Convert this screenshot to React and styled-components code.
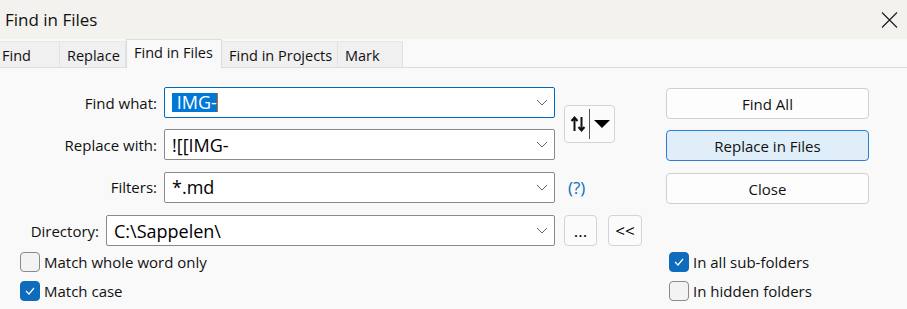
import React from 'react';
import styled, { createGlobalStyle, css } from 'styled-components';

const Global = createGlobalStyle`
    html, body {
        margin: 0;
        padding: 0;
        background: #f9f9f9;
        font-family: 'Open Sans', 'Noto Sans', sans-serif;
        color: #111;
    }
`

const Window = styled.div`
    width: 907px;
    height: 309px;
    overflow: hidden;
    background: #f9f9f9;
`

const TitleBar = styled.div`
    height: 39px;
    background: #f3f2ee;
    display: flex;
    align-items: center;
    justify-content: space-between;
    padding: 0 5px 0 5px;
    box-sizing: border-box;
    font-size: 17px;
`

const CloseBtn = styled.div`
    width: 24px;
    height: 24px;
    display: flex;
    align-items: center;
    justify-content: center;
    margin-right: 1px;
`

const TabStrip = styled.div`
    height: 28px;
    display: flex;
    align-items: flex-end;
    border-bottom: 1px solid #dcdcdc;
`

const Tab = styled.div`
    box-sizing: border-box;
    width: ${p => p.w}px;
    height: 26px;
    padding-left: ${p => p.pl ?? 7}px;
    padding-top: 1px;
    display: flex;
    align-items: center;
    font-size: 14.5px;
    background: #f0f0f0;
    border-right: 1px solid #e2e2e2;
    border-top: 1px solid #e8e8e8;
    ${p => p.active && css`
        height: 29px;
        background: #f9f9f9;
        border: 1px solid #dcdcdc;
        border-bottom: none;
        margin-bottom: -1px;
        padding-top: 0;
        padding-bottom: 3px;
        position: relative;
    `}
`

const Content = styled.div`
    display: grid;
    grid-template-columns: 666px 203px;
    padding-top: 19px;
`

const Form = styled.div`
    display: grid;
    grid-template-columns: 164px 391px auto;
    grid-template-rows: 31px 31px 32px;
    row-gap: 11px;
    align-items: center;
`

const Label = styled.label`
    font-size: 15px;
    text-align: right;
    padding-right: 7px;
`

const Combo = styled.div`
    box-sizing: border-box;
    height: 31px;
    width: ${p => p.w ? p.w + 'px' : 'auto'};
    background: #fff;
    border: 1px solid ${p => p.focused ? '#0067c0' : '#8a8a8a'};
    border-radius: 2px;
    display: flex;
    align-items: center;
    justify-content: space-between;
    padding: 0 6px 0 7px;
    font-size: 18px;
    color: #000;
    white-space: pre;
`

const Selected = styled.span`
    background: #0078d7;
    color: #fff;
    height: 19px;
    line-height: 19px;
    border-right: 1px solid #d06a10;
    display: inline-flex;
    align-items: center;
`

const SmallBtn = styled.div`
    box-sizing: border-box;
    width: ${p => p.w}px;
    height: ${p => p.h}px;
    margin-left: ${p => p.ml || 0}px;
    border: 1px solid #d4d4d4;
    border-radius: 4px;
    background: #fbfbfb;
    display: flex;
    align-items: center;
    justify-content: center;
    font-size: 17px;
    color: #000;
`

const SwapBtn = styled(SmallBtn)`
    grid-column: 3;
    grid-row: 1 / span 2;
    gap: 3px;
    padding-left: 1px;
`

const Divider = styled.div`
    width: 1px;
    height: 30px;
    background: #555;
`

const Help = styled.span`
    margin-left: 13px;
    font-size: 17px;
    color: #0f6cbd;
`

const DirRow = styled.div`
    display: flex;
    align-items: center;
    margin-top: 12px;
`

const DirLabel = styled(Label)`
    width: 106px;
    box-sizing: border-box;
`

const Buttons = styled.div`
    display: flex;
    flex-direction: column;
    gap: 11px;
    padding-top: 1px;
`

const Button = styled.div`
    box-sizing: border-box;
    height: 31px;
    border: 1px solid ${p => p.primary ? '#2a7fd4' : '#d0d0d0'};
    background: ${p => p.primary ? '#e0eef9' : '#fdfdfd'};
    border-radius: 4px;
    display: flex;
    align-items: center;
    justify-content: center;
    font-size: 15px;
    color: #111;
    &:nth-child(3) { margin-top: 1px; }
`

const Options = styled.div`
    display: grid;
    grid-template-columns: 669px auto;
    row-gap: 9px;
    padding-top: 6px;
`

const Option = styled.div`
    display: flex;
    align-items: center;
    gap: 4px;
    height: 20px;
    font-size: 15px;
    padding-left: ${p => p.pl || 0}px;
`

const Box = styled.span`
    box-sizing: border-box;
    width: 20px;
    height: 20px;
    border-radius: 4px;
    display: flex;
    align-items: center;
    justify-content: center;
    background: ${p => p.checked ? '#0f6cbd' : '#f3f3f3'};
    border: 1px solid ${p => p.checked ? '#0f6cbd' : '#8a8a8a'};
`

const Chevron = () => (
    <svg width="12" height="7" viewBox="0 0 12 7">
        <path d="M1 1 L6 6 L11 1" fill="none" stroke="#666" strokeWidth="1" />
    </svg>
);

const Check = () => (
    <svg width="12" height="10" viewBox="0 0 12 10">
        <path d="M2 5 L5 8 L10 2" fill="none" stroke="#fff" strokeWidth="1.2" />
    </svg>
);

const Checkbox = ({ checked, children, pl }) => (
    <Option pl={pl}>
        <Box checked={checked}>{checked && <Check />}</Box>
        {children}
    </Option>
);

const tabs = [
    { title: 'Find', w: 60, pl: 2 },
    { title: 'Replace', w: 66 },
    { title: 'Find in Files', w: 96, active: true },
    { title: 'Find in Projects', w: 116 },
    { title: 'Mark', w: 65 },
];

const App = () => {
    return (
        <Window>
            <Global />
            <TitleBar>
                <span>Find in Files</span>
                <CloseBtn>
                    <svg width="17" height="16" viewBox="0 0 17 16">
                        <path d="M1 0.5 L16 15.5 M16 0.5 L1 15.5" stroke="#1a1a1a" strokeWidth="1.1" />
                    </svg>
                </CloseBtn>
            </TitleBar>
            <TabStrip>
                {tabs.map((t, i) => (
                    <Tab key={i} w={t.w} pl={t.pl} active={t.active}>{t.title}</Tab>
                ))}
            </TabStrip>
            <Content>
                <div>
                    <Form>
                        <Label>Find what:</Label>
                        <Combo focused>
                            <Selected> IMG-</Selected>
                            <Chevron />
                        </Combo>
                        <SwapBtn w={51} h={38} ml={9}>
                            <svg width="16" height="18" viewBox="0 0 16 18">
                                <path d="M4.5 16 V3 M1.5 6 L4.5 2.5 L7.5 6" fill="none" stroke="#111" strokeWidth="2" />
                                <path d="M11.5 2 V15 M8.5 12 L11.5 15.5 L14.5 12" fill="none" stroke="#111" strokeWidth="2" />
                            </svg>
                            <Divider />
                            <svg width="18" height="10" viewBox="0 0 18 10">
                                <path d="M1 1 H17 L9 9 Z" fill="#000" />
                            </svg>
                        </SwapBtn>
                        <Label>Replace with:</Label>
                        <Combo>
                            <span>![[IMG-</span>
                            <Chevron />
                        </Combo>
                        <Label>Filters:</Label>
                        <Combo>
                            <span>*.md</span>
                            <Chevron />
                        </Combo>
                        <Help>(?)</Help>
                    </Form>
                    <DirRow>
                        <DirLabel>Directory:</DirLabel>
                        <Combo w={449}>
                            <span>C:\Sappelen\</span>
                            <Chevron />
                        </Combo>
                        <SmallBtn w={33} h={31} ml={9}>...</SmallBtn>
                        <SmallBtn w={34} h={31} ml={11}>&lt;&lt;</SmallBtn>
                    </DirRow>
                </div>
                <Buttons>
                    <Button>Find All</Button>
                    <Button primary>Replace in Files</Button>
                    <Button>Close</Button>
                </Buttons>
            </Content>
            <Options>
                <Checkbox pl={20}>Match whole word only</Checkbox>
                <Checkbox checked>In all sub-folders</Checkbox>
                <Checkbox pl={20} checked>Match case</Checkbox>
                <Checkbox>In hidden folders</Checkbox>
            </Options>
        </Window>
    );
};

export default App;
